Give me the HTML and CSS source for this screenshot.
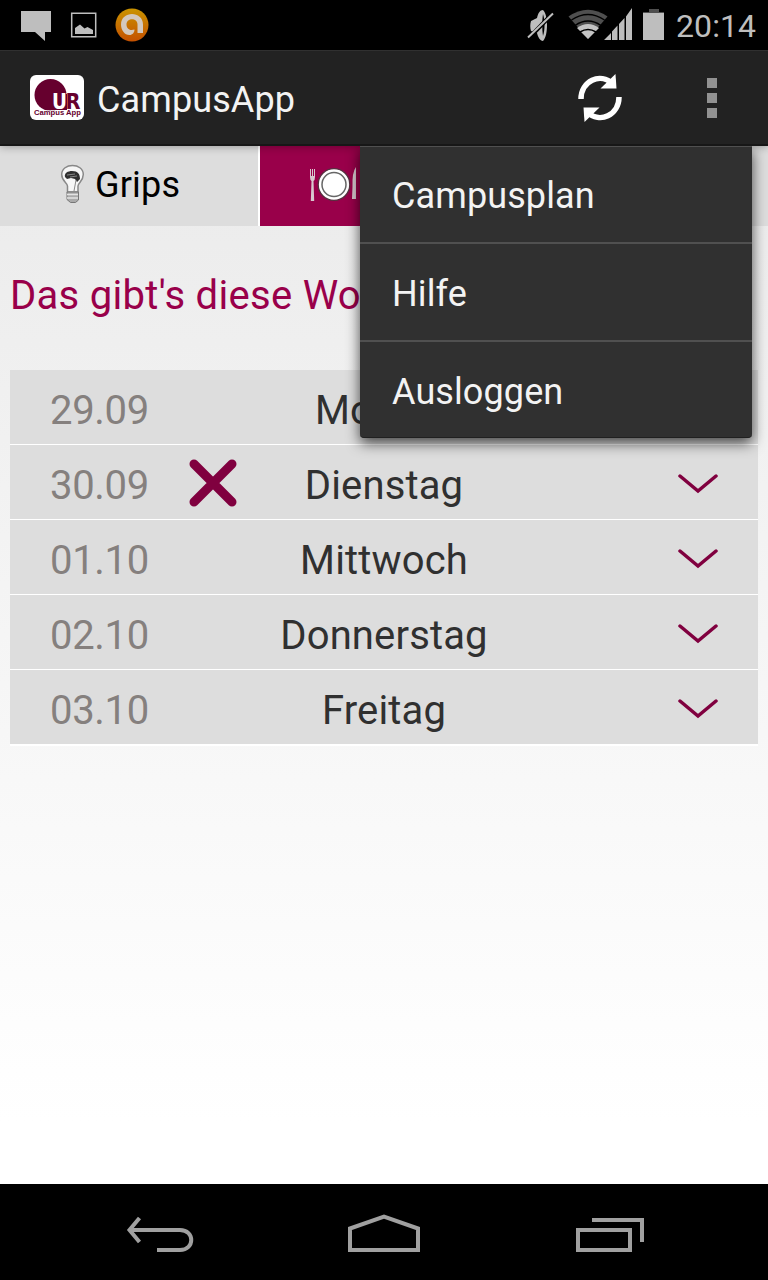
FILE: index.html
```html
<!DOCTYPE html>
<html lang="de">
<head>
<meta charset="utf-8">
<title>CampusApp</title>
<link rel="stylesheet" href="styles.css">
</head>
<body>
<div class="screen">
  <div class="status">
    <svg class="status-left" viewBox="0 0 160 50">
      <path fill="#bebebe" d="M21 11h30v21h-6v9l-10-9H21z"/>
      <path fill="none" stroke="#bebebe" stroke-width="1.500" d="M71.700 13.200h24v23.500h-24z"/>
      <path fill="#bebebe" d="M75 34v-6l5-3.500 4.500 4 3-1.500 5.500 3v4z"/>
      <defs><linearGradient id="orange" x1="0" y1="0" x2="0" y2="1"><stop offset="0" stop-color="#ca9400"/><stop offset="1" stop-color="#c45000"/></linearGradient></defs>
      <circle cx="132" cy="25" r="16.500" fill="url(#orange)"/>
      <path fill="#d3c8bd" d="M143 33h-5.500v-8.500c0-7-11-7-11 0 0 4 3 5.500 5 5.500l3-.5c0 3-2 5.500-5 5.500-5 0-8.500-5-8.500-10.500 0-14 22-14 22 0z"/>
    </svg>
    <div class="status-right">
      <svg class="signals" viewBox="525 0 145 50">
        <path fill="#bebebe" d="M531 21l6-3c1-5 3-8 6-8 3 3 4 9 4 15s-1 13-4 16c-3 0-5-4-6-8l-6-2c-1-3-1-7 0-10z"/>
        <path fill="#000" d="M543 14c2 6 2 16 0 22-1-6-1-16 0-22z"/>
        <path stroke="#000" stroke-width="4" d="M529 38l24-25"/>
        <path stroke="#bebebe" stroke-width="2" d="M528 37.500l25-24"/>
        <path fill="#4f4f4f" d="M568.500 16.500Q588 3 607.500 16.500L588 39z"/>
        <path fill="#c4c4c4" d="M577 28q11-8 22 0L588 39z"/>
        <path fill="none" stroke="#000" stroke-width="1.500" d="M571.500 20q16.500-11 33 0M575 25.500q13-9 26 0M580 32q8-5 16 0"/>
        <path fill="#bebebe" d="M604 40L611 33v7zM612 31.500l5.500-6V40H612zM619 24l5.500-6V40H619zM626 16.500l6-8.500v32h-6z"/>
        <path fill="#4f4f4f" d="M649 9h10v3h5v2h-21v-2h6z"/>
        <path fill="#bebebe" d="M643 13h21v27h-21z"/>
      </svg>
      <span class="clock">20:14</span>
    </div>
  </div>
  <header class="bar">
    <svg class="logo" viewBox="0 0 54 45">
      <rect width="54" height="45" rx="6" fill="#fff"/>
      <circle cx="20.500" cy="20" r="16" fill="#66002e"/>
      <path fill="#66002e" d="M22 19h15v16H22z"/>
      <text class="logo-u" x="22" y="34" textLength="15" lengthAdjust="spacingAndGlyphs">U</text>
      <text class="logo-r" x="35.500" y="34" textLength="15" lengthAdjust="spacingAndGlyphs">R</text>
      <text class="logo-name" x="4" y="39.500" textLength="47" lengthAdjust="spacingAndGlyphs">Campus App</text>
    </svg>
    <h1 class="title">CampusApp</h1>
    <svg class="refresh" viewBox="570 69 60 60">
      <g id="arrow"><path fill="none" stroke="#fff" stroke-width="5.500" d="M581 100c0-18 19-27 32-15"/><path fill="#fff" d="M615.500 75l1 14.500h-16z"/></g>
      <use href="#arrow" transform="rotate(180 600 99)"/>
    </svg>
    <div class="dots"><i></i><i></i><i></i></div>
    <nav class="menu">
      <a class="menu-item">Campusplan</a>
      <a class="menu-item">Hilfe</a>
      <a class="menu-item">Ausloggen</a>
    </nav>
  </header>
  <main class="content">
    <div class="tabs">
      <div class="tab">
        <svg class="bulb" viewBox="60 164 25 40">
          <path fill="#f6f6f6" stroke="#888" stroke-width="1.500" d="M67.500 192v-6c0-3-5.800-5-5.800-11.500 0-12 21.600-12 21.600 0 0 6.500-5.300 8.500-5.300 11.500v6z"/>
          <path fill="#303030" d="M65 177c-1-4 3-6 7-6 6 0 8 3 8 8l-3 3-2-3-4-1-4 1z"/>
          <path stroke="#888" fill="none" d="M67 175l8-1M70 177l7-1M76 180l-2 11"/>
          <path fill="#aaa" stroke="#777" d="M67 192h11.500v8l-3 2.500h-5l-3.500-3z"/>
          <path stroke="#e4e4e4" stroke-width="1.500" d="M67 194.500h11M67 198h11"/>
        </svg>
        <span class="tab-label">Grips</span>
      </div>
      <div class="tab tab-active">
        <svg class="plate" viewBox="308 164 52 40">
          <path fill="#d8c8cf" d="M310 169h1v7h1v-7h1v7h1v-7h1v8q0 3-1.500 4l.7 20h-3.400l.7-20q-1.500-1-1.500-4zM356 167q-4 5-3.500 20l-.5 12h4z"/>
          <circle cx="334" cy="184.500" r="15.800" fill="#fff" stroke="#55303f" stroke-width="1.300"/>
          <circle cx="334" cy="184.500" r="12" fill="#fff" stroke="#666" stroke-width="1.500"/>
        </svg>
      </div>
      <div class="tab"></div>
    </div>
    <h2 class="heading">Das gibt's diese Woche</h2>
    <div class="days">
      <div class="day"><span class="date">29.09</span><span></span><span class="name">Montag</span></div>
      <div class="day"><span class="date">30.09</span><svg class="cross" viewBox="0 0 48 48"><path d="M5 5l38 38M43 5L5 43"/></svg><span class="name">Dienstag</span><svg class="chevron" viewBox="0 0 40 20"><path d="M2 2l18 15L38 2"/></svg></div>
      <div class="day"><span class="date">01.10</span><span></span><span class="name">Mittwoch</span><svg class="chevron" viewBox="0 0 40 20"><path d="M2 2l18 15L38 2"/></svg></div>
      <div class="day"><span class="date">02.10</span><span></span><span class="name">Donnerstag</span><svg class="chevron" viewBox="0 0 40 20"><path d="M2 2l18 15L38 2"/></svg></div>
      <div class="day"><span class="date">03.10</span><span></span><span class="name">Freitag</span><svg class="chevron" viewBox="0 0 40 20"><path d="M2 2l18 15L38 2"/></svg></div>
    </div>
  </main>
  <footer class="navbar">
    <svg viewBox="0 1184 768 96">
      <path d="M139.500 1218l-10 12 10 12M130 1230h50c15 0 15 20 0 20h-23"/>
      <path d="M350 1250v-21.500l34-12 34 12v21.500z"/>
      <path d="M578 1230h52v20h-52zM592 1220h50v22"/>
    </svg>
  </footer>
</div>
</body>
</html>
```
FILE: styles.css
```css
* { box-sizing: border-box; }
body { margin: 0; font-family: Roboto, "Liberation Sans", sans-serif; }
svg { display: block; flex: none; }
h1, h2 { margin: 0; font-weight: 400; }
.screen { width: 768px; height: 1280px; display: flex; flex-direction: column; overflow: hidden; }
.status { height: 50px; background: #000; display: flex; justify-content: space-between; }
.status-left { width: 160px; height: 50px; }
.status-right { display: flex; width: 243px; }
.signals { width: 145px; height: 50px; }
.clock { padding-left: 6px; color: #bebebe; font-size: 32px; letter-spacing: .1px; line-height: 52px; white-space: nowrap; }
.bar { position: relative; z-index: 2; height: 96px; display: flex; align-items: center; padding: 0 51px 0 30px; background: #222; border-top: 1px solid #303030; border-bottom: 2px solid #171717; box-shadow: 0 1px 8px rgba(0, 0, 0, .3); }
.logo { width: 54px; height: 45px; margin-right: 13px; }
.logo-u, .logo-r { font: bold 21px "DejaVu Sans", sans-serif; }
.logo-u { fill: #fff; }
.logo-r { fill: #66002e; }
.logo-name { font: bold 7px "Liberation Sans", sans-serif; fill: #66002e; stroke: #fff; stroke-width: 1.500; paint-order: stroke; }
.title { color: #f3f3f3; font-size: 36px; line-height: 42px; letter-spacing: .1px; padding-top: 4px; flex: 1; }
.refresh { width: 60px; height: 60px; margin-right: 77px; }
.dots { display: flex; flex-direction: column; gap: 5px; }
.dots i { width: 10px; height: 10px; background: #929292; }
.menu { position: absolute; top: 95px; right: 16px; width: 392px; height: 292px; background: #303030; border-top: 1px solid #505050; border-bottom: 1px solid #202020; border-radius: 0 0 4px 4px; box-shadow: 0 5px 14px rgba(0, 0, 0, .7); clip-path: inset(0 -20px -30px -20px); }
.menu-item { display: block; height: 98px; padding: 2px 32px 0; border-bottom: 2px solid #505050; color: #f3f3f3; font-size: 36px; line-height: 97px; letter-spacing: .1px; }
.menu-item:first-child { height: 97px; padding-top: 1px; }
.menu-item:last-child { border: 0; }
.content { height: 1038px; background: linear-gradient(#ebebeb, #fff 94%); }
.tabs { height: 80px; display: grid; grid-template-columns: 258px 256px 1fr; column-gap: 2px; background: #fff; }
.tab { background: #ddd; display: flex; align-items: center; padding-left: 60px; }
.tab-active { background: #99004a; padding-left: 48px; }
.bulb { width: 25px; height: 40px; margin-top: -4px; }
.plate { width: 52px; height: 40px; margin-top: -4px; }
.tab-label { color: #000; font-size: 36px; letter-spacing: .2px; padding-left: 10px; margin-top: -2px; }
.heading { height: 144px; padding: 46px 10px 0; color: #99004a; font-size: 40px; line-height: 48px; letter-spacing: .3px; white-space: nowrap; }
.days { margin: 0 10px; border-bottom: 1px solid #fff; }
.day { display: grid; grid-template-columns: 139px 55px 280px 1fr; align-items: center; height: 75px; padding-left: 40px; background: #ddd; border-bottom: 1px solid #fff; font-size: 40px; line-height: 48px; }
.date { color: #85807e; padding-top: 8px; letter-spacing: -.3px; }
.name { color: #303030; text-align: center; padding-top: 8px; letter-spacing: .15px; }
.cross { width: 48px; height: 48px; margin-top: 1px; fill: none; stroke: #80003f; stroke-width: 9; stroke-linecap: round; }
.chevron { width: 40px; height: 20px; margin: 4px 0 0 154px; fill: none; stroke: #80003f; stroke-width: 3.500; stroke-linecap: round; }
.navbar { height: 96px; background: #000; }
.navbar svg { width: 768px; height: 96px; fill: none; stroke: #a0a0a0; stroke-width: 4; }
```
